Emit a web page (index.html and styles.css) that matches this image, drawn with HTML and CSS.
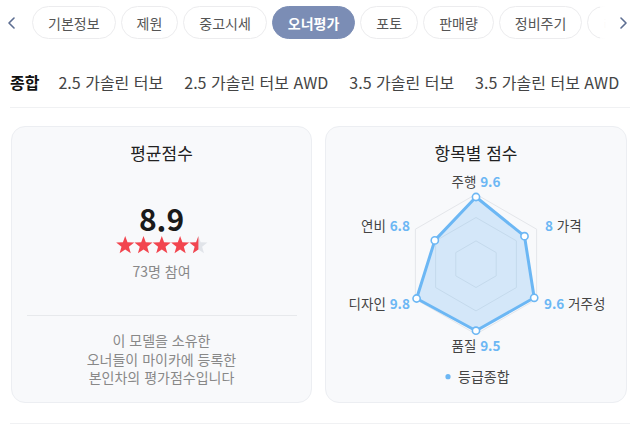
FILE: index.html
```html
<!DOCTYPE html>
<html lang="ko">
<head>
<meta charset="utf-8">
<link rel="stylesheet" href="styles.css">
</head>
<body>
<nav class="chips-bar">
  <button class="arrow arrow-left" aria-label="이전">
    <svg width="7" height="12" viewBox="0 0 7 12"><path d="M6 1 L1 6 L6 11" fill="none" stroke="#5d6e92" stroke-width="1.6" stroke-linecap="round" stroke-linejoin="round"/></svg>
  </button>
  <div class="chips">
    <span class="chip">기본정보</span>
    <span class="chip">제원</span>
    <span class="chip">중고시세</span>
    <span class="chip active">오너평가</span>
    <span class="chip">포토</span>
    <span class="chip">판매량</span>
    <span class="chip">정비주기</span>
    <span class="chip">리콜</span>
  </div>
  <div class="fade-right">
    <svg width="7" height="12" viewBox="0 0 7 12"><path d="M1 1 L6 6 L1 11" fill="none" stroke="#5d6e92" stroke-width="1.6" stroke-linecap="round" stroke-linejoin="round"/></svg>
  </div>
</nav>

<div class="trims">
  <span class="trim current">종합</span>
  <span class="trim">2.5 가솔린 터보</span>
  <span class="trim">2.5 가솔린 터보 AWD</span>
  <span class="trim">3.5 가솔린 터보</span>
  <span class="trim">3.5 가솔린 터보 AWD</span>
</div>

<section class="cards">
  <div class="card avg">
    <h2 class="card-title">평균점수</h2>
    <div class="score">8.9</div>
    <svg class="stars" width="92" height="18" viewBox="0 0 92 18">
      <defs>
        <polygon id="st" points="0,-9.5 2.29,-3.16 9.04,-2.94 3.71,1.21 5.58,7.69 0,3.9 -5.58,7.69 -3.71,1.21 -9.04,-2.94 -2.29,-3.16"/>
        <clipPath id="half"><rect x="-10" y="-10" width="10" height="20"/></clipPath>
      </defs>
      <use href="#st" x="9.2" y="9.5" fill="#f2454f"/>
      <use href="#st" x="27.5" y="9.5" fill="#f2454f"/>
      <use href="#st" x="45.8" y="9.5" fill="#f2454f"/>
      <use href="#st" x="64.1" y="9.5" fill="#f2454f"/>
      <use href="#st" x="82.4" y="9.5" fill="#e1e4e9"/>
      <use href="#st" x="82.4" y="9.5" fill="#f2454f" clip-path="url(#half)"/>
    </svg>
    <div class="count">73명 참여</div>
    <hr class="divider">
    <p class="note">이 모델을 소유한<br>오너들이 마이카에 등록한<br>본인차의 평가점수입니다</p>
  </div>

  <div class="card items">
    <h2 class="card-title">항목별 점수</h2>
    <svg class="radar" width="300" height="232" viewBox="0 0 300 232">
      <g fill="none" stroke="#e4e6ea" stroke-width="1">
        <polygon points="150,29.2 210.6,64.2 210.6,134.2 150,169.2 89.4,134.2 89.4,64.2"/>
        <polygon points="150,52.5 190.4,75.85 190.4,122.55 150,145.9 109.6,122.55 109.6,75.85"/>
        <polygon points="150,75.9 170.2,87.55 170.2,110.85 150,122.5 129.8,110.85 129.8,87.55"/>
      </g>
      <polygon points="150,32 198.5,71.2 208.2,132.8 150,165.7 90.6,133.5 108.8,75.4" fill="rgba(108,183,244,0.26)" stroke="#6cb7f4" stroke-width="3" stroke-linejoin="round"/>
      <g fill="#fff" stroke="#6cb7f4" stroke-width="1.6">
        <circle cx="150" cy="32" r="3.6"/>
        <circle cx="198.5" cy="71.2" r="3.6"/>
        <circle cx="208.2" cy="132.8" r="3.6"/>
        <circle cx="150" cy="165.7" r="3.6"/>
        <circle cx="90.6" cy="133.5" r="3.6"/>
        <circle cx="108.8" cy="75.4" r="3.6"/>
      </g>
      <g class="lbl">
        <text x="150" y="21.5" text-anchor="middle">주행 <tspan class="val">9.6</tspan></text>
        <text x="84" y="65.5" text-anchor="end">연비 <tspan class="val">6.8</tspan></text>
        <text x="219" y="65.5"><tspan class="val">8</tspan> 가격</text>
        <text x="84" y="143.5" text-anchor="end">디자인 <tspan class="val">9.8</tspan></text>
        <text x="218" y="143.5"><tspan class="val">9.6</tspan> 거주성</text>
        <text x="150" y="185.5" text-anchor="middle">품질 <tspan class="val">9.5</tspan></text>
      </g>
      <circle cx="122" cy="211.7" r="2.6" fill="#6cb7f4"/>
      <text class="legend" x="132" y="217">등급종합</text>
    </svg>
  </div>
</section>
<div class="bottom-line"></div>
</body>
</html>
```

FILE: styles.css
```css
* { box-sizing: border-box; }
html, body { margin: 0; padding: 0; background: #fff; }
body {
  width: 640px;
  height: 427px;
  overflow: hidden;
  font-family: "Noto Sans CJK KR", "Noto Sans", sans-serif;
  color: #222;
}

.chips-bar {
  position: relative;
  display: flex;
  align-items: flex-start;
  height: 42px;
  padding-top: 6px;
  overflow: hidden;
}
.arrow {
  flex: 0 0 32px;
  height: 33px;
  border: 0;
  background: none;
  padding: 0 0 0 8px;
  display: flex;
  align-items: center;
}
.chips {
  display: flex;
  gap: 5px;
  white-space: nowrap;
}
.chip {
  display: inline-flex;
  align-items: center;
  height: 33px;
  padding: 0 15px;
  border: 1px solid #ececee;
  border-radius: 17px;
  background: #fff;
  font-size: 14px;
  color: #555;
}
.chip.active {
  background: #7b8db5;
  border-color: #7b8db5;
  color: #fff;
  font-weight: 700;
}
.fade-right {
  position: absolute;
  top: 0;
  right: 0;
  width: 40px;
  height: 42px;
  background: linear-gradient(to right, rgba(255,255,255,0.85), #fff 15%);
  display: flex;
  align-items: center;
  justify-content: flex-end;
  padding: 4px 13px 0 0;
}

.trims {
  display: flex;
  align-items: center;
  gap: 21px;
  height: 66px;
  margin: 0 10px;
  padding-top: 14px;
  border-bottom: 1px solid #f0f1f3;
  white-space: nowrap;
}
.trim {
  font-size: 16px;
  color: #444;
  line-height: 22px;
}
.trim.current {
  font-weight: 700;
  color: #111;
  margin-right: -2px;
}

.cards {
  display: grid;
  grid-template-columns: 1fr 1fr;
  gap: 13px;
  padding: 18px 13px 0 11px;
}
.card {
  height: 277px;
  background: #f8f9fb;
  border: 1px solid #eceef2;
  border-radius: 14px;
  padding-top: 14px;
  display: flex;
  flex-direction: column;
  align-items: center;
}
.card-title {
  margin: 0;
  font-size: 17px;
  font-weight: 400;
  line-height: 24px;
  color: #222;
}
.score {
  margin-top: 35px;
  font-size: 30px;
  font-weight: 700;
  line-height: 36px;
  color: #1a1a1a;
}
.stars { display: block; margin-top: 0; }
.count {
  margin-top: 7px;
  font-size: 14px;
  line-height: 20px;
  color: #888;
}
.divider {
  align-self: stretch;
  margin: 34px 14px 0 15px;
  border: 0;
  border-top: 1px solid #e7e9ec;
  height: 0;
}
.note {
  margin: 15px 0 0;
  font-size: 14px;
  line-height: 18.5px;
  color: #888;
  text-align: center;
}

.radar { display: block; }
.lbl text {
  font-size: 13.5px;
  fill: #444;
}
.lbl .val {
  fill: #6cb7f4;
  font-weight: 700;
}
.legend {
  font-size: 14px;
  fill: #444;
}

.bottom-line {
  margin: 20px 10px 0;
  border-top: 1px solid #f0f1f3;
}
```
